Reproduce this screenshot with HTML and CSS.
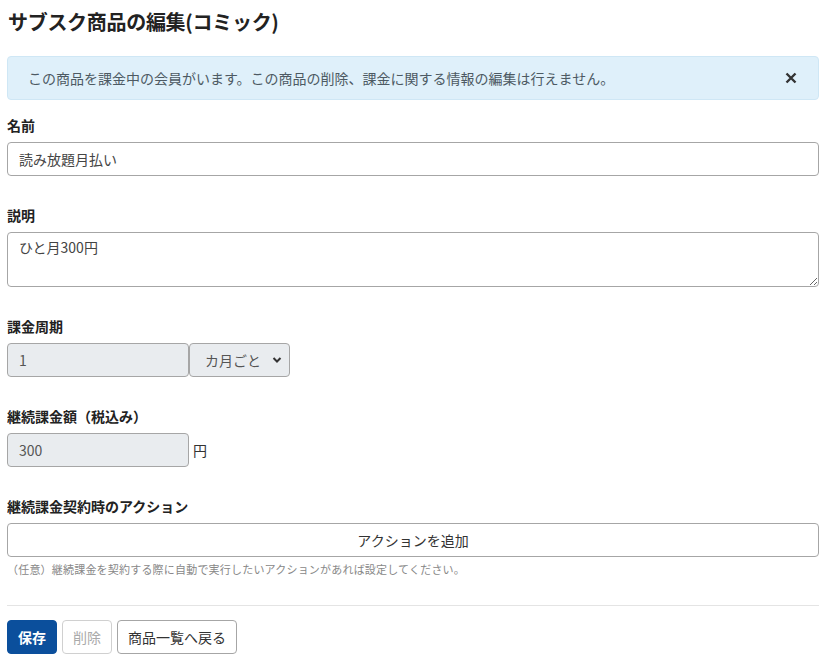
FILE: index.html
```html
<!DOCTYPE html>
<html lang="ja">
<head>
<meta charset="utf-8">
<title>サブスク商品の編集</title>
<link rel="stylesheet" href="styles.css">
</head>
<body>
<h1 class="title">サブスク商品の編集(コミック)</h1>
<div class="alert">
  <span class="alert-text">この商品を課金中の会員がいます。この商品の削除、課金に関する情報の編集は行えません。</span>
  <svg class="alert-close" width="12" height="12" viewBox="0 0 12 12"><path d="M1.5 1.5 L10.5 10.5 M10.5 1.5 L1.5 10.5" stroke="#333" stroke-width="2.4" stroke-linecap="butt"/></svg>
</div>
<form class="form">
  <div class="field">
    <label class="label">名前</label>
    <input class="control" type="text" value="読み放題月払い">
  </div>
  <div class="field">
    <label class="label">説明</label>
    <textarea class="control textarea">ひと月300円</textarea>
  </div>
  <div class="field">
    <label class="label">課金周期</label>
    <div class="row">
      <input class="control short" type="text" value="1" disabled>
      <div class="select">
        <span>カ月ごと</span>
        <svg class="chev" width="10" height="8" viewBox="0 0 10 8"><path d="M1.5 2 L5 5.5 L8.5 2" fill="none" stroke="#333" stroke-width="2"/></svg>
      </div>
    </div>
  </div>
  <div class="field">
    <label class="label">継続課金額（税込み）</label>
    <div class="row">
      <input class="control short" type="text" value="300" disabled>
      <span class="unit">円</span>
    </div>
  </div>
  <div class="field last">
    <label class="label">継続課金契約時のアクション</label>
    <button type="button" class="action-btn">アクションを追加</button>
    <p class="help">（任意）継続課金を契約する際に自動で実行したいアクションがあれば設定してください。</p>
  </div>
  <hr class="divider">
  <div class="buttons">
    <button type="button" class="btn primary">保存</button>
    <button type="button" class="btn disabled">削除</button>
    <button type="button" class="btn">商品一覧へ戻る</button>
  </div>
</form>
</body>
</html>
```
FILE: styles.css
```css
* { box-sizing: border-box; }
body {
  margin: 8px 17px 8px 7px;
  font-family: "Noto Sans CJK JP", "Noto Sans", sans-serif;
  color: #212529;
  background: #fff;
  font-size: 14px;
}
.title {
  margin: 0 0 20px 1px;
  font-size: 20px;
  line-height: 28px;
  font-weight: 700;
  letter-spacing: -0.3px;
  color: #222;
}
.alert {
  display: flex;
  align-items: center;
  justify-content: space-between;
  height: 44px;
  padding: 0 21px 0 20px;
  background: #dff0fa;
  border: 1px solid #cfe7f5;
  border-radius: 4px;
  color: #4d5a63;
  margin-bottom: 15px;
}
.alert-text { font-size: 14px; line-height: 20px; }
.alert-close { display: block; flex: none; }
.form { margin: 0; }
.field { margin-bottom: 29px; }
.field.last { margin-bottom: 0; }
.label {
  display: block;
  font-size: 14px;
  line-height: 20px;
  font-weight: 700;
  color: #222;
  margin-bottom: 7px;
}
.control {
  display: block;
  width: 100%;
  height: 34px;
  padding: 0 11px;
  font-family: inherit;
  font-size: 14px;
  color: #444;
  border: 1px solid #a6a6a6;
  border-radius: 4px;
  background: #fff;
}
.textarea {
  height: 55px;
  padding: 4px 11px;
  line-height: 20px;
  resize: vertical;
}
.row { display: flex; align-items: center; }
.short {
  width: 182px;
  background: #e9ecef;
  color: #555;
}
.select {
  width: 101px;
  height: 34px;
  margin-left: 0;
  border: 1px solid #a6a6a6;
  border-radius: 4px;
  background: #e9ecef;
  display: flex;
  align-items: center;
  justify-content: space-between;
  padding: 0 7px 0 15px;
  color: #555;
  font-size: 14px;
}
.chev { display: block; }
.unit { margin-left: 4px; font-size: 14px; color: #333; }
.action-btn {
  display: block;
  width: 100%;
  height: 34px;
  border: 1px solid #a6a6a6;
  border-radius: 4px;
  background: #fff;
  font-family: inherit;
  font-size: 14px;
  color: #333;
}
.help {
  margin: 4px 0 0 0;
  font-size: 11px;
  line-height: 16px;
  letter-spacing: 0.2px;
  color: #888;
}
.divider {
  border: 0;
  border-top: 1px solid #e4e4e4;
  margin: 28px 0 14px 0;
}
.buttons { display: flex; gap: 5px; }
.btn {
  height: 34px;
  padding: 0 10px;
  font-family: inherit;
  font-size: 14px;
  border: 1px solid #a6a6a6;
  border-radius: 4px;
  background: #fff;
  color: #333;
}
.btn.primary {
  background: #0b4f9c;
  border-color: #0b4f9c;
  color: #fff;
  font-weight: 700;
}
.btn.disabled {
  color: #aaa;
  border-color: #d0d0d0;
}
```
